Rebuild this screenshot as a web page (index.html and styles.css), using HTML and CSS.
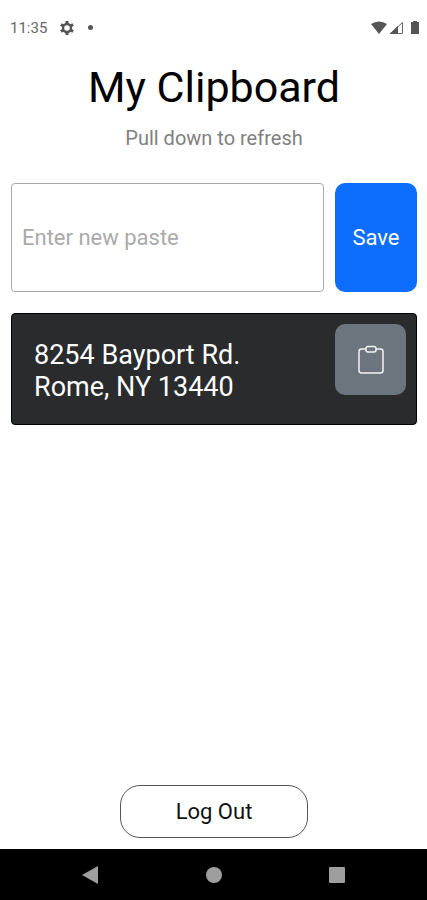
FILE: index.html
```html
<!DOCTYPE html>
<html lang="en">
<head>
  <meta charset="UTF-8">
  <meta name="viewport" content="width=device-width, initial-scale=1">
  <title>My Clipboard</title>
  <link rel="stylesheet" href="styles.css">
</head>
<body>
  <div class="status-bar">
    <span class="time">11:35</span>
    <svg class="gear" width="16" height="16" viewBox="0 0 16 16">
      <circle cx="8" cy="8" r="4" fill="none" stroke="#555" stroke-width="2.4"/>
      <path d="M8 1v3M8 12v3M1.9 4.5l2.6 1.5M11.5 10l2.6 1.5M1.9 11.5l2.6-1.5M11.5 6l2.6-1.5" stroke="#555" stroke-width="3"/>
    </svg>
    <span class="dot"></span>
    <svg class="signals" width="50" height="16" viewBox="0 0 50 16">
      <path d="M0 4Q8-1 16 4L8 14Z" fill="#555"/>
      <path d="M31.500 2.500V13.500H19.500Z" fill="none" stroke="#666"/>
      <path d="M27 6V14H18.500Z" fill="#555"/>
      <path d="M40 2h2V1h4v1h2v12h-8Z" fill="#555"/>
    </svg>
  </div>

  <main>
    <h1>My Clipboard</h1>
    <p class="hint">Pull down to refresh</p>

    <form class="paste-form" onsubmit="event.preventDefault()">
      <input type="text" id="paste" aria-label="New paste" placeholder="Enter new paste">
      <button type="submit" class="save">Save</button>
    </form>

    <div class="card">
      <p>8254 Bayport Rd.<br>Rome, NY 13440</p>
      <button type="button" class="copy" aria-label="Copy">
        <svg width="26" height="30" viewBox="0 0 26 30" fill="none" stroke="#f1f3f5" stroke-width="1.500">
          <path d="M8 4H3.500Q1 4 1 6.500V25.500Q1 28 3.500 28H22.500Q25 28 25 25.500V6.500Q25 4 22.500 4H18"/>
          <rect x="8" y="1.500" width="10" height="5.500" rx="2"/>
        </svg>
      </button>
    </div>

    <button type="button" class="logout">Log Out</button>
  </main>

  <nav class="nav-bar">
    <button type="button" aria-label="Back">
      <svg width="18" height="18" viewBox="0 0 18 18"><path d="M0 9L16 0V18Z" fill="#9e9e9e"/></svg>
    </button>
    <button type="button" aria-label="Home">
      <svg width="18" height="18" viewBox="0 0 18 18"><circle cx="9" cy="9" r="8" fill="#9e9e9e"/></svg>
    </button>
    <button type="button" aria-label="Recent apps">
      <svg width="18" height="18" viewBox="0 0 18 18"><rect x="1" y="1" width="16" height="16" rx="1" fill="#9e9e9e"/></svg>
    </button>
  </nav>
</body>
</html>
```

FILE: styles.css
```css
* {
  box-sizing: border-box;
}

body {
  display: flex;
  flex-direction: column;
  min-height: 100vh;
  margin: 0;
  background-color: #fff;
  color: #111;
  font-family: Roboto, sans-serif;
}

button,
input {
  font-family: inherit;
  font-size: 22px;
}

button {
  padding: 0;
  border: none;
  cursor: pointer;
}

svg {
  display: block;
}

.status-bar {
  display: flex;
  align-items: center;
  height: 55px;
  padding: 0 6px 0 10px;
  color: #666;
  font-size: 15px;
}

.gear {
  margin-left: 12px;
}

.dot {
  width: 5px;
  height: 5px;
  margin-left: 13px;
  border-radius: 50%;
  background-color: #555;
}

.signals {
  margin-left: auto;
}

main {
  flex: 1;
  display: flex;
  flex-direction: column;
  padding: 6px 10px 11px 11px;
}

h1 {
  margin: 0;
  color: #000;
  font-size: 43px;
  font-weight: 400;
  line-height: 52px;
  text-align: center;
}

.hint {
  margin: 13px 0 33px;
  color: #808080;
  font-size: 20px;
  line-height: 24px;
  text-align: center;
}

.paste-form {
  display: flex;
  gap: 11px;
  height: 109px;
}

.paste-form input {
  flex: 1;
  min-width: 0;
  padding: 0 10px;
  border: 1px solid #aaa;
  border-radius: 4px;
  background-color: #fff;
  color: #111;
}

.paste-form input::placeholder {
  color: #aaa;
}

.save {
  width: 82px;
  border-radius: 10px;
  background-color: #0d6efd;
  color: #fff;
}

.card {
  display: flex;
  align-items: flex-start;
  justify-content: space-between;
  margin-top: 21px;
  padding: 10px;
  border: 1px solid #000;
  border-radius: 4px;
  background-color: #292b2c;
  color: #fff;
}

.card p {
  margin: 0;
  padding: 15px 12px 11px;
  font-size: 27px;
  line-height: 32px;
}

.copy {
  display: flex;
  align-items: center;
  justify-content: center;
  width: 71px;
  height: 71px;
  border-radius: 10px;
  background-color: #6c757d;
}

.logout {
  align-self: center;
  width: 188px;
  height: 53px;
  margin-top: auto;
  border: 1px solid #555;
  border-radius: 20px;
  background-color: #fff;
  color: #111;
}

.nav-bar {
  display: flex;
  justify-content: center;
  gap: 105px;
  height: 51px;
  background-color: #000;
}

.nav-bar button {
  background: none;
}
```
